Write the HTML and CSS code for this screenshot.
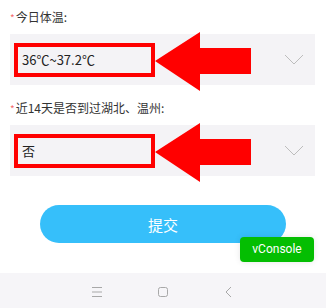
FILE: index.html
```html
<!DOCTYPE html>
<html lang="zh-CN">
<head>
  <meta charset="UTF-8">
  <meta name="viewport" content="width=device-width, initial-scale=1.0">
  <title>健康登记</title>
  <link rel="stylesheet" href="styles.css">
</head>
<body>
  <div class="form">
    <div class="group">
      <div class="label"><span class="star">*</span>今日体温:</div>
      <div class="field">
        <div class="value">36℃~37.2℃</div>
        <svg class="chevron" width="20" height="11" viewBox="0 0 20 11"><polyline points="1,1 10,10 19,1" fill="none" stroke="#bdbdbd" stroke-width="1"/></svg>
        <svg class="arrow" width="97" height="60" viewBox="0 0 97 60"><polygon points="0,29 45,0 45,16 96,16 96,42 45,42 45,59" fill="#f00"/></svg>
      </div>
    </div>
    <div class="group">
      <div class="label"><span class="star">*</span>近14天是否到过湖北、温州:</div>
      <div class="field">
        <div class="value">否</div>
        <svg class="chevron" width="20" height="11" viewBox="0 0 20 11"><polyline points="1,1 10,10 19,1" fill="none" stroke="#bdbdbd" stroke-width="1"/></svg>
        <svg class="arrow" width="97" height="60" viewBox="0 0 97 60"><polygon points="0,29 45,0 45,16 96,16 96,42 45,42 45,59" fill="#f00"/></svg>
      </div>
    </div>
    <button class="submit">提交</button>
  </div>

  <div class="vconsole">vConsole</div>

  <div class="navbar">
    <svg width="20" height="12" viewBox="0 0 20 12"><path d="M5 1.5h10M5 6h10M5 10.5h10" stroke="#a8a8a8" stroke-width="1"/></svg>
    <svg width="20" height="12" viewBox="0 0 20 12"><rect x="5.5" y="1.5" width="9" height="9" rx="2" fill="none" stroke="#a8a8a8" stroke-width="1"/></svg>
    <svg width="20" height="12" viewBox="0 0 20 12"><polyline points="12,1 7,6 12,11" fill="none" stroke="#a8a8a8" stroke-width="1"/></svg>
  </div>
</body>
</html>
```

FILE: styles.css
```css
/* Page */
body {
  margin: 0;
  font-family: "Noto Sans CJK SC", "Noto Sans", sans-serif;
  background: #fff;
  color: #333;
  height: 308px;
  overflow: hidden;
}
.form {
  display: flex;
  flex-direction: column;
}
.group + .group {
  margin-top: 6px;
}
.label {
  padding: 7px 10px 6px;
  line-height: 20px;
  font-size: 12px;
  color: #333;
}
.star {
  color: #f56c6c;
  font-size: 10px;
  margin-right: 1px;
}
.field {
  position: relative;
  display: flex;
  align-items: center;
  height: 51px;
  margin: 0 11px 0 10px;
  background: #f4f3f6;
}
.value {
  box-sizing: border-box;
  width: 141px;
  height: 34px;
  margin-left: 4px;
  padding-left: 4px;
  border: 4px solid #f00;
  font-size: 13px;
  line-height: 26px;
  color: #222;
}
.chevron {
  margin-left: auto;
  margin-right: 11px;
}
.arrow {
  position: absolute;
  left: 145px;
  top: -2px;
}
.submit {
  align-self: flex-start;
  width: 246px;
  height: 38px;
  margin: 29px 0 0 40px;
  border: none;
  border-radius: 19px;
  background: #36bffa;
  color: #fff;
  font-family: inherit;
  font-size: 15px;
}
.vconsole {
  position: absolute;
  right: 12px;
  top: 237px;
  width: 74px;
  height: 25px;
  line-height: 25px;
  border-radius: 4px;
  background: #04be02;
  color: #fff;
  text-align: center;
  font-family: "Roboto", "Liberation Sans", sans-serif;
  font-size: 12px;
  box-shadow: 0 0 6px rgba(0, 0, 0, 0.1);
}
.navbar {
  display: flex;
  justify-content: center;
  align-items: center;
  gap: 46px;
  height: 37px;
  margin-top: 30px;
  background: #f6f5f8;
}
```
